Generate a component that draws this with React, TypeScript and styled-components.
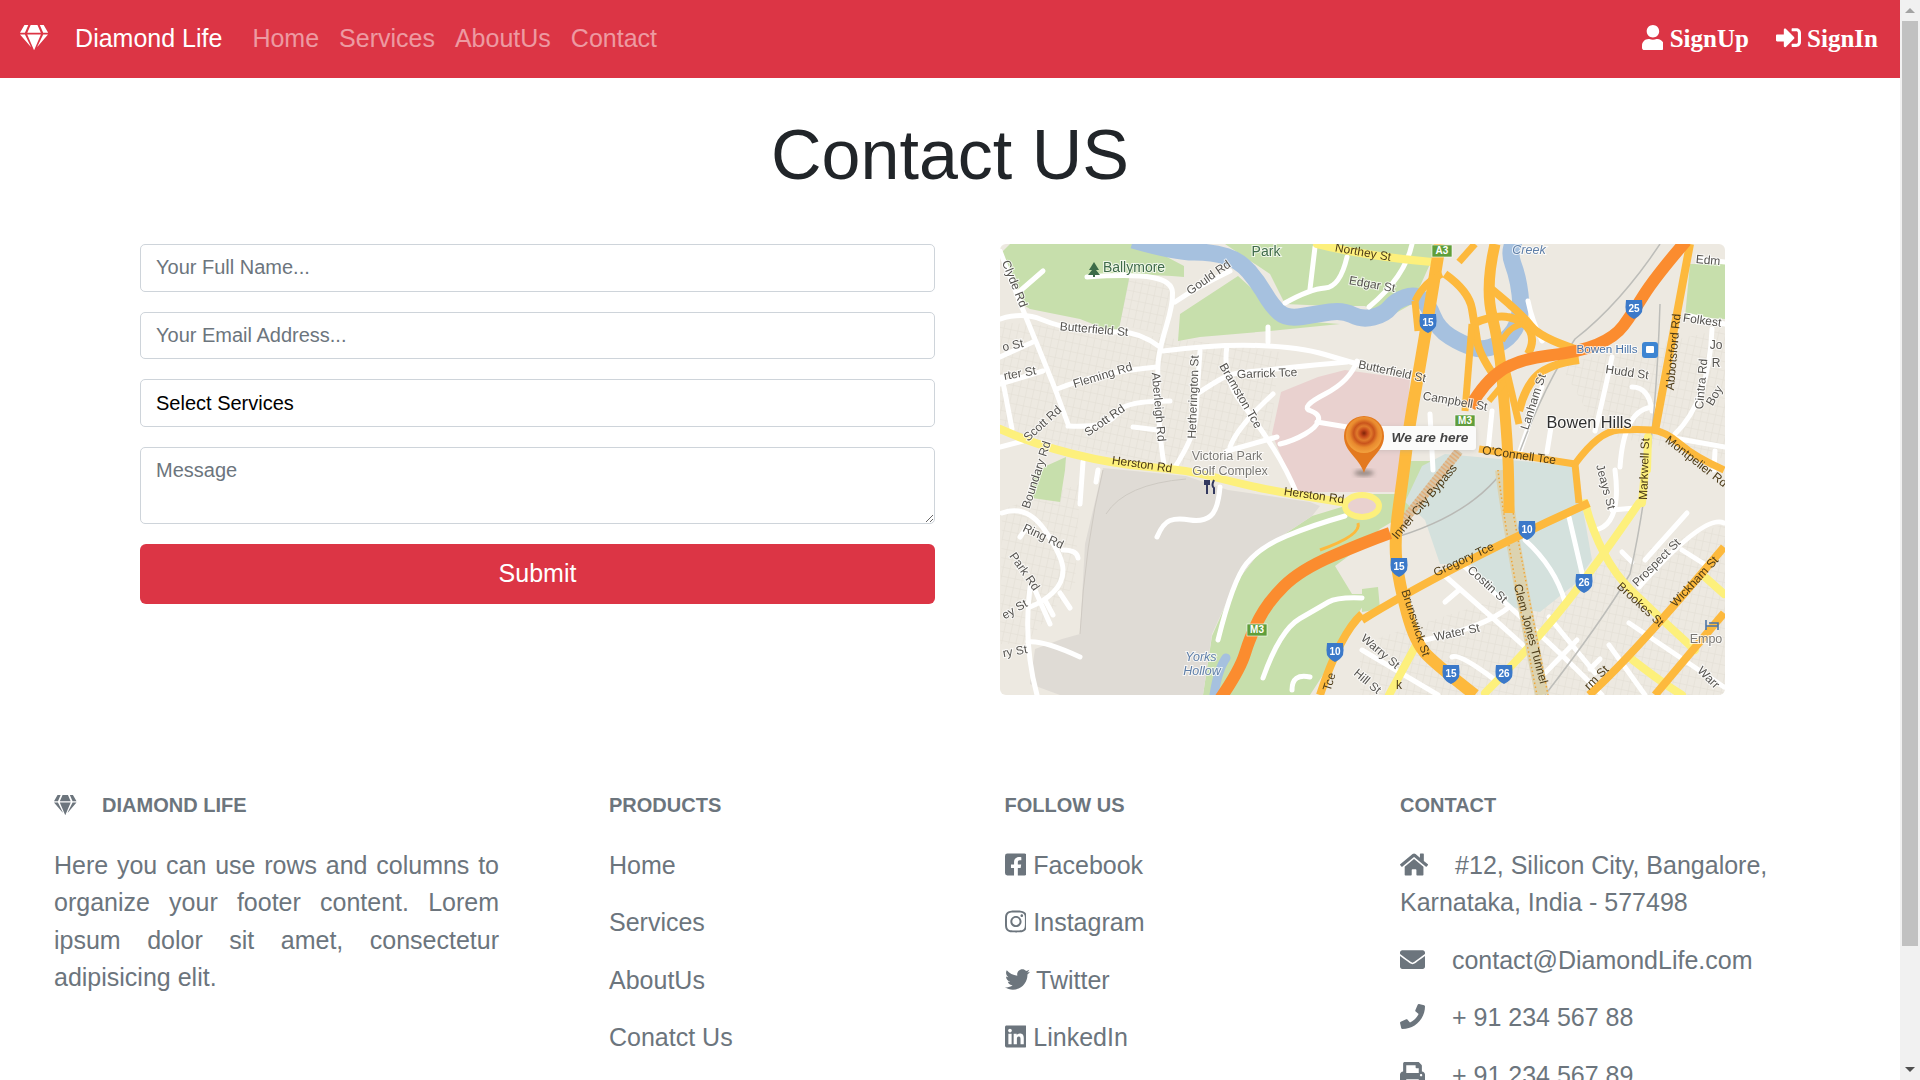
import React from "react";
import styled, { createGlobalStyle } from "styled-components";
import {
  FaEnvelope,
  FaFacebookSquare,
  FaGem,
  FaHome,
  FaInstagram,
  FaLinkedin,
  FaPhone,
  FaPrint,
  FaSignInAlt,
  FaTwitter,
  FaUser,
} from "react-icons/fa";

const GlobalStyle = createGlobalStyle`
  html, body {
    margin: 0;
    padding: 0;
    height: 100%;
    overflow: hidden;
    background: #fff;
  }
  body {
    font-family: "Liberation Sans", Arial, sans-serif;
    font-size: 25px;
    line-height: 1.5;
    color: #212529;
  }
  * {
    box-sizing: border-box;
  }
`;

const iconCss = `
  svg {
    vertical-align: -0.125em;
  }
`;

// font awesome glyphs keep their own width, the way the icon font does
const GemIcon = styled(FaGem)`
  width: 1.125em;
`;

const HomeIcon = styled(FaHome)`
  width: 1.125em;
`;

const UserIcon = styled(FaUser)`
  width: 0.875em;
`;

const FacebookIcon = styled(FaFacebookSquare)`
  width: 0.875em;
`;

const InstagramIcon = styled(FaInstagram)`
  width: 0.875em;
`;

const LinkedinIcon = styled(FaLinkedin)`
  width: 0.875em;
`;

/* page shell: content on the left, the browser scrollbar on the right */
const Shell = styled.div`
  display: flex;
  width: 100%;
  height: 100vh;
`;

const Content = styled.div`
  flex: 1;
  min-width: 0;
  height: 100%;
  overflow: hidden;
`;

const ScrollRail = styled.div`
  width: 20px;
  height: 100%;
  flex: none;
  display: flex;
  flex-direction: column;
  background: #f1f1f1;
`;

const ScrollButton = styled.div<{ $down?: boolean }>`
  height: 21px;
  flex: none;
  display: flex;
  align-items: center;
  justify-content: center;
  &::before {
    content: "";
    border-left: 5px solid transparent;
    border-right: 5px solid transparent;
    border-bottom: ${(p) => (p.$down ? "0" : "5px solid #a3a3a3")};
    border-top: ${(p) => (p.$down ? "5px solid #505050" : "0")};
  }
`;

const ScrollThumb = styled.div`
  height: 925px;
  margin: 0 2px;
  background: #c1c1c1;
`;

const ScrollGap = styled.div`
  flex: 1;
`;

/* navbar */
const NavBar = styled.nav`
  height: 78px;
  display: flex;
  align-items: center;
  padding: 0 22px 0 20px;
  background: #dc3545;
`;

const Brand = styled.a`
  color: #fff;
  font-size: 25px;
  line-height: 37.5px;
  margin-right: 20px;
  white-space: pre;
  ${iconCss}
  svg {
    margin-right: 20px;
  }
`;

const NavLinks = styled.div`
  display: flex;
  flex: 1;
`;

const NavLink = styled.a`
  padding: 0 10px;
  color: rgba(255, 255, 255, 0.5);
  font-size: 25px;
  line-height: 37.5px;
`;

const AuthLinks = styled.div`
  display: flex;
  gap: 27px;
`;

const AuthLink = styled.a`
  color: #fff;
  font-family: "Liberation Serif", "Times New Roman", serif;
  font-weight: 700;
  font-size: 25px;
  line-height: 37.5px;
  white-space: pre;
  ${iconCss}
`;

/* contact section */
const PageTitle = styled.h1`
  margin: 35px 0 47px;
  font-size: 70px;
  font-weight: 400;
  line-height: 84px;
  text-align: center;
  color: #212529;
`;

const ContactRow = styled.section`
  display: flex;
  align-items: flex-start;
  gap: 65px;
  padding-left: 140px;
`;

const ContactForm = styled.form`
  width: 795px;
  display: flex;
  flex-direction: column;
  gap: 20px;
`;

const fieldCss = `
  display: block;
  width: 100%;
  padding: 7.5px 15px;
  border: 1px solid #ced4da;
  border-radius: 5px;
  background: #fff;
  font-family: "Liberation Sans", Arial, sans-serif;
  font-size: 20px;
  line-height: 30px;
  outline: none;
  &::placeholder {
    color: #6c757d;
    opacity: 1;
  }
`;

const TextInput = styled.input`
  ${fieldCss}
  height: 47.5px;
  color: #495057;
`;

const ServiceSelect = styled.select`
  ${fieldCss}
  height: 47.5px;
  color: #000;
  appearance: none;
`;

const MessageBox = styled.textarea`
  ${fieldCss}
  height: 77px;
  color: #495057;
`;

const SubmitButton = styled.button`
  height: 60px;
  border: 0;
  border-radius: 6px;
  background: #dc3545;
  color: #fff;
  font-family: "Liberation Sans", Arial, sans-serif;
  font-size: 25px;
`;

/* map, drawn by hand */
const MapFrame = styled.svg`
  display: block;
  width: 725px;
  height: 451px;
  flex: none;
  border-radius: 6px;
  filter: blur(0.5px);
`;

const labelFill: Record<string, string> = {
  street: "#55534f",
  road: "#4b3a17",
  water: "#5f7fa8",
  park: "#3f6b4a",
  poi: "#7a7874",
  transit: "#4a74a8",
  town: "#2f2f2f",
};

const labelSize: Record<string, number> = {
  street: 12,
  road: 12,
  water: 12.5,
  park: 14,
  poi: 12.5,
  transit: 11.7,
  town: 16.3,
};

const MapLabel = styled.text<{ $kind: string }>`
  font-family: "Liberation Sans", Arial, sans-serif;
  font-size: ${(p) => labelSize[p.$kind]}px;
  font-style: ${(p) => (p.$kind === "water" ? "italic" : "normal")};
  fill: ${(p) => labelFill[p.$kind]};
  text-anchor: middle;
  dominant-baseline: middle;
  stroke: ${(p) => (p.$kind === "road" ? "none" : "rgba(255,255,255,0.75)")};
  stroke-width: 2px;
  paint-order: stroke;
`;

const ShieldText = styled.text`
  font-family: "Liberation Sans", Arial, sans-serif;
  font-size: 10px;
  font-weight: 700;
  fill: #fff;
  text-anchor: middle;
  dominant-baseline: middle;
`;

const PinText = styled.text`
  font-family: "Liberation Sans", Arial, sans-serif;
  font-size: 13.6px;
  font-weight: 700;
  font-style: italic;
  fill: #444;
  text-anchor: middle;
  dominant-baseline: middle;
`;

type Pt = [number, number];

const toPath = (pts: Pt[]) => {
  let d = `M${pts[0][0]} ${pts[0][1]}`;
  for (let i = 1; i < pts.length - 1; i++) {
    const mx = (pts[i][0] + pts[i + 1][0]) / 2;
    const my = (pts[i][1] + pts[i + 1][1]) / 2;
    d += i === pts.length - 2 ? ` Q${pts[i][0]} ${pts[i][1]} ${pts[i + 1][0]} ${pts[i + 1][1]}` : ` Q${pts[i][0]} ${pts[i][1]} ${mx} ${my}`;
  }
  if (pts.length === 2) d += ` L${pts[1][0]} ${pts[1][1]}`;
  return d;
};

const toPoly = (pts: Pt[]) => pts.map((p) => p.join(",")).join(" ");

const greens: Pt[][] = [
  [[2, 8], [10, 0], [135, 0], [165, 12], [184, 22], [184, 33], [172, 32], [130, 30], [118, 90], [80, 75], [30, 65], [22, 60]],
  [[178, 97], [180, 70], [238, 32], [258, 50], [280, 76], [313, 78], [340, 80], [270, 87], [200, 93]],
  [[225, 0], [440, 0], [430, 20], [412, 60], [385, 75], [365, 62], [330, 62], [285, 60], [270, 30]],
  [[690, 20], [725, 20], [725, 75], [685, 73]],
  [[46, 222], [66, 213], [65, 226], [60, 258], [32, 254], [33, 232]],
  [[203, 451], [212, 392], [235, 340], [262, 305], [312, 272], [345, 262], [372, 250], [400, 250], [407, 217], [430, 217], [420, 260], [395, 276], [380, 285], [365, 300], [335, 322], [352, 350], [372, 350], [350, 380], [330, 420], [310, 451]],
  [[362, 345], [378, 343], [380, 365], [362, 368]],
];

const golf: Pt[] = [[103, 224], [186, 232], [228, 246], [310, 258], [320, 262], [312, 272], [262, 305], [235, 340], [212, 390], [203, 451], [60, 451], [30, 440], [35, 405], [62, 395], [80, 390], [85, 300]];
const hospital: Pt[] = [[281, 148], [318, 133], [345, 126], [410, 135], [401, 248], [296, 248], [272, 190]];
const showground: Pt[] = [[422, 222], [445, 210], [575, 222], [582, 260], [592, 316], [575, 340], [540, 368], [505, 362], [470, 320], [440, 320], [425, 276], [405, 258]];

const blocks: Pt[][] = [
  [[0, 78], [120, 88], [280, 108], [270, 190], [180, 222], [40, 200], [0, 180]],
  [[125, 35], [172, 40], [160, 90], [118, 80]],
  [[560, 120], [725, 85], [725, 215], [600, 190]],
  [[360, 400], [725, 280], [725, 451], [360, 451]],
  [[2, 265], [80, 240], [75, 340], [25, 400], [0, 400]],
];

const riverWest: Pt[] = [[133, -4], [175, 8], [213, 8], [240, 17], [258, 38], [272, 62], [287, 75], [317, 70], [343, 66], [362, 76], [385, 70], [395, 57], [415, 50], [428, 60], [438, 85], [462, 100], [485, 107], [512, 93], [522, 67], [518, 33], [508, 7], [515, -4]];

const whiteRoads: Pt[][] = [
  [[0, 7], [23, 67], [55, 143], [68, 180]],
  [[20, 47], [43, 27]],
  [[0, 75], [23, 68], [60, 83], [100, 88], [140, 88], [160, 103]],
  [[87, 33], [133, 30], [172, 37], [173, 60], [160, 103], [157, 127], [160, 200], [165, 226]],
  [[175, 58], [197, 43], [230, 27]],
  [[163, 107], [217, 100], [300, 103], [350, 118], [365, 122]],
  [[268, 83], [268, 98]],
  [[227, 102], [222, 133], [260, 183], [287, 226], [297, 250]],
  [[200, 107], [197, 150], [195, 193], [173, 226]],
  [[197, 150], [222, 133], [240, 128], [347, 118]],
  [[57, 145], [100, 128], [157, 123]],
  [[68, 182], [90, 183], [113, 177], [125, 157], [170, 157]],
  [[133, 183], [158, 186]],
  [[230, 203], [237, 183], [273, 150]],
  [[227, 207], [277, 193]],
  [[280, 200], [293, 197], [317, 183], [320, 170], [300, 163], [350, 137], [357, 117]],
  [[317, 178], [347, 183]],
  [[0, 113], [33, 98]],
  [[0, 140], [43, 127]],
  [[2, 133], [12, 185]],
  [[0, 203], [23, 197]],
  [[83, 218], [80, 260]],
  [[98, 226], [96, 238]],
  [[2, 269], [27, 260], [63, 313], [63, 339], [43, 358], [30, 363]],
  [[30, 343], [23, 399], [37, 451]],
  [[28, 398], [43, 396], [80, 413]],
  [[35, 346], [50, 380]],
  [[45, 356], [53, 371]],
  [[60, 349], [70, 364]],
  [[63, 306], [77, 306], [78, 314]],
  [[20, 293], [27, 283]],
  [[157, 293], [163, 279], [177, 274], [203, 278], [218, 266], [220, 243]],
  [[218, 396], [233, 336], [260, 303], [313, 281], [345, 272]],
  [[263, 434], [280, 386], [320, 363], [337, 353], [362, 354]],
  [[292, 446], [292, 429], [310, 433]],
  [[285, 59], [310, 45], [340, 43], [347, 13]],
  [[310, 45], [315, 3]],
  [[369, 63], [405, 33], [412, 0]],
  [[528, 57], [532, 77], [542, 97]],
  [[430, 170], [433, 226]],
  [[492, 167], [488, 207]],
  [[520, 207], [542, 143]],
  [[547, 208], [552, 177]],
  [[595, 187], [602, 160], [612, 113]],
  [[620, 223], [624, 163], [655, 163]],
  [[632, 143], [649, 143], [652, 167]],
  [[675, 190], [709, 157], [712, 85]],
  [[668, 193], [725, 203]],
  [[698, 15], [725, 18]],
  [[690, 72], [725, 80]],
  [[715, 207], [714, 226]],
  [[569, 273], [582, 329]],
  [[525, 296], [555, 323], [565, 358]],
  [[465, 323], [559, 406], [602, 451]],
  [[425, 396], [485, 383], [509, 363]],
  [[445, 358], [459, 346]],
  [[445, 332], [500, 380], [525, 403]],
  [[452, 413], [459, 409], [495, 436]],
  [[362, 406], [438, 451]],
  [[577, 396], [545, 429]],
  [[549, 373], [595, 429]],
  [[609, 401], [645, 451]],
  [[629, 379], [724, 443]],
  [[645, 316], [687, 269]],
  [[639, 343], [705, 269], [724, 279]],
  [[682, 306], [709, 323]],
  [[595, 286], [622, 281], [615, 226]],
  [[612, 266], [635, 264]],
  [[622, 308], [632, 318]],
  [[590, 425], [600, 415]],
];

const yellowRoads: Pt[][] = [
  [[0, 185], [33, 200], [113, 220], [187, 226], [233, 238], [283, 249], [347, 259]],
  [[317, 0], [365, 12], [432, 18]],
  [[585, 259], [600, 316], [662, 376], [695, 406]],
  [[639, 259], [600, 316], [535, 399], [485, 449]],
  [[645, 226], [642, 259]],
  [[648, 193], [647, 226]],
  [[389, 451], [415, 403]],
  [[705, 333], [724, 350]],
  [[629, 413], [662, 439], [682, 451]],
];

const orangeRoads: { w: number; pts: Pt[] }[] = [
  { w: 12, pts: [[440, 0], [425, 93], [409, 183], [404, 226], [394, 296], [399, 339], [415, 399], [439, 423], [475, 451]] },
  { w: 8, pts: [[362, 376], [399, 353], [522, 289], [589, 259]] },
  { w: 8, pts: [[362, 370], [340, 390], [320, 451]] },
  { w: 7, pts: [[479, 205], [575, 220]] },
  { w: 7, pts: [[575, 220], [599, 187], [639, 185], [665, 187], [695, 213], [724, 226]] },
  { w: 7, pts: [[579, 259], [575, 220]] },
  { w: 8, pts: [[690, 0], [662, 150], [655, 187]] },
  { w: 11, pts: [[509, 269], [509, 226], [505, 167], [499, 100], [485, 43], [495, 0]] },
  { w: 8, pts: [[472, 80], [495, 70], [525, 77], [535, 97], [528, 110]] },
  { w: 8, pts: [[445, 30], [469, 47], [475, 83], [479, 110], [495, 133]] },
  { w: 7, pts: [[415, 57], [425, 37], [442, 30]] },
  { w: 7, pts: [[415, 57], [418, 87]] },
  { w: 7, pts: [[459, 18], [475, 0]] },
  { w: 7, pts: [[472, 80], [465, 167]] },
  { w: 8, pts: [[489, 43], [522, 70], [539, 93], [575, 105]] },
  { w: 6, pts: [[502, 97], [509, 83], [522, 80]] },
  { w: 8, pts: [[579, 116], [549, 120], [525, 143], [519, 167]] },
  { w: 6, pts: [[489, 157], [509, 133]] },
  { w: 7, pts: [[505, 120], [519, 180]] },
  { w: 8, pts: [[589, 451], [629, 416], [724, 303]] },
  { w: 8, pts: [[655, 451], [724, 369]] },
  { w: 3, pts: [[358, 279], [362, 291], [320, 306]] },
];

const freeways: Pt[][] = [
  [[220, 455], [240, 426], [250, 393], [267, 359], [300, 326], [365, 298], [390, 289]],
  [[470, 163], [485, 137], [519, 115], [579, 108], [615, 93], [632, 70], [655, 33], [686, -3]],
];

const mapLabels: [string, number, number, number, string][] = [
  ["Clyde Rd", 14, 40, 68, "street"],
  ["Ballymore", 134, 24, 0, "park"],
  ["Gould Rd", 209, 34, -35, "street"],
  ["Park", 266, 8, 0, "park"],
  ["Northey St", 363, 9, 10, "road"],
  ["Edgar St", 372, 41, 10, "street"],
  ["Creek", 529, 7, 0, "water"],
  ["Edm", 708, 17, 5, "street"],
  ["Butterfield St", 94, 86, 5, "street"],
  ["Butterfield St", 392, 128, 12, "street"],
  ["o St", 13, 102, -12, "street"],
  ["rter St", 20, 130, -10, "street"],
  ["Fleming Rd", 103, 132, -17, "street"],
  ["Aberleigh Rd", 158, 163, 85, "street"],
  ["Hetherington St", 194, 153, -88, "street"],
  ["Bramston Tce", 240, 152, 60, "street"],
  ["Garrick Tce", 267, 130, -2, "street"],
  ["Scott Rd", 43, 180, -42, "street"],
  ["Scott Rd", 105, 177, -35, "street"],
  ["Boundary Rd", 37, 231, -72, "street"],
  ["Herston Rd", 142, 221, 8, "road"],
  ["Herston Rd", 314, 252, 8, "road"],
  ["Victoria Park", 227, 213, 0, "poi"],
  ["Golf Complex", 230, 228, 0, "poi"],
  ["Ring Rd", 43, 293, 25, "street"],
  ["Park Rd", 24, 328, 55, "street"],
  ["ey St", 15, 366, -30, "street"],
  ["ry St", 15, 408, -10, "street"],
  ["Yorks", 201, 414, 0, "water"],
  ["Hollow", 202, 428, 0, "water"],
  ["Inner City Bypass", 425, 258, -50, "road"],
  ["Gregory Tce", 464, 316, -25, "road"],
  ["Costin St", 487, 341, 42, "street"],
  ["Clem Jones Tunnel", 530, 390, 75, "road"],
  ["Brunswick St", 415, 379, 72, "road"],
  ["Water St", 457, 389, -12, "street"],
  ["Warry St", 380, 408, 40, "street"],
  ["Hill St", 367, 438, 40, "street"],
  ["Brookes St", 640, 361, 43, "road"],
  ["Prospect St", 657, 319, -45, "street"],
  ["Wickham St", 695, 338, -47, "road"],
  ["Empo", 706, 396, 0, "poi"],
  ["Jeays St", 605, 243, 75, "street"],
  ["Markwell St", 645, 225, -88, "road"],
  ["Montpelier Rd", 696, 218, 38, "road"],
  ["O'Connell Tce", 519, 212, 8, "road"],
  ["Bowen Hills", 589, 180, 0, "town"],
  ["Bowen Hills", 607, 106, 0, "transit"],
  ["Hudd St", 627, 129, 8, "street"],
  ["Abbotsford Rd", 674, 108, -85, "road"],
  ["Folkest", 702, 77, 8, "street"],
  ["Campbell St", 455, 158, 10, "street"],
  ["Lanham St", 534, 158, -72, "street"],
  ["Cintra Rd", 702, 140, -85, "street"],
  ["Boy", 715, 152, -60, "street"],
  ["Jo", 716, 102, 0, "street"],
  ["R", 716, 120, 0, "street"],
  ["Warr", 708, 434, 45, "street"],
  ["rm St", 597, 434, -45, "road"],
  ["Tce", 330, 438, -72, "road"],
  ["k", 399, 442, 0, "road"],
];

const interstates: [string, number, number][] = [
  ["15", 428, 79],
  ["25", 634, 65],
  ["10", 527, 286],
  ["26", 584, 339],
  ["15", 399, 323],
  ["15", 451, 430],
  ["26", 504, 430],
  ["10", 335, 408],
];

const motorways: [string, number, number][] = [
  ["M3", 257, 386],
  ["M3", 465, 177],
  ["A3", 442, 7],
];

const MapPicture = () => (
  <MapFrame viewBox="0 0 725 451" role="img" aria-label="Map">
    <defs>
      <radialGradient id="pinHead" cx="50%" cy="45%" r="55%">
        <stop offset="0" stopColor="#7e2308" />
        <stop offset="0.18" stopColor="#c4471a" />
        <stop offset="0.36" stopColor="#e07b2c" />
        <stop offset="0.52" stopColor="#c9541c" />
        <stop offset="0.72" stopColor="#e98a2e" />
        <stop offset="1" stopColor="#f2a23f" />
      </radialGradient>
      <filter id="soft" x="-30%" y="-30%" width="160%" height="160%">
        <feGaussianBlur stdDeviation="2" />
      </filter>
      <pattern id="hatch" width="7" height="9" patternUnits="userSpaceOnUse" patternTransform="rotate(12)">
        <path d="M0 0 V9 M0 0 H7" fill="none" stroke="#e2ddd3" strokeWidth="1" />
      </pattern>
    </defs>
    <rect width="725" height="451" fill="#ede9e1" />
    {blocks.map((b, i) => (
      <polygon key={i} points={toPoly(b)} fill="url(#hatch)" />
    ))}
    {greens.map((g, i) => (
      <polygon key={i} points={toPoly(g)} fill="#c7dfac" />
    ))}
    <polygon points={toPoly(golf)} fill="#dfdbd5" />
    <polygon points={toPoly(hospital)} fill="#e9d1cf" />
    <polygon points={toPoly(showground)} fill="#d4e1dd" />
    <path d={toPath(riverWest)} fill="none" stroke="#a6c1df" strokeWidth="17" strokeLinejoin="round" />
    <path d="M214 451 Q218 425 226 414" fill="none" stroke="#a6c1df" strokeWidth="9" strokeLinecap="round" />
    <path d="M103 226 Q85 300 80 390" fill="none" stroke="#cfcac3" strokeWidth="1" />
    <path d="M106 270 Q125 240 186 235" fill="none" stroke="#cdc9c2" strokeWidth="1" />
    {whiteRoads.map((r, i) => (
      <path key={i} d={toPath(r)} fill="none" stroke="#fff" strokeWidth="5" strokeLinecap="round" strokeLinejoin="round" />
    ))}
    <path d="M520 207 Q545 140 575 95 Q620 60 660 0" fill="none" stroke="#bdbdb9" strokeWidth="1.5" />
    <path d="M545 451 Q600 380 630 330 Q655 220 660 60" fill="none" stroke="#bdbdb9" strokeWidth="1.5" />
    <path d="M400 292 Q470 270 502 228" fill="none" stroke="#b9b9b5" strokeWidth="1.5" />
    {yellowRoads.map((r, i) => (
      <path key={i} d={toPath(r)} fill="none" stroke="#fdf07c" strokeWidth="8" strokeLinecap="round" strokeLinejoin="round" />
    ))}
    <ellipse cx="362" cy="262" rx="17" ry="11" fill="#e9d1cf" stroke="#fdf07c" strokeWidth="6" />
    <path d="M394 289 L459 207" fill="none" stroke="#d9c6a8" strokeWidth="9" />
    <path d="M394 289 L459 207" fill="none" stroke="#e89a55" strokeWidth="9" strokeDasharray="1.5 2" opacity="0.55" />
    <path d="M502 226 Q510 290 542 451" fill="none" stroke="#dcd3b0" strokeWidth="14" />
    <path d="M498 226 Q505 290 537 451" fill="none" stroke="#f0a638" strokeWidth="1.5" strokeDasharray="1.5 2.5" />
    <path d="M506 226 Q516 290 548 451" fill="none" stroke="#f0a638" strokeWidth="1.5" strokeDasharray="1.5 2.5" />
    {orangeRoads.map((r, i) => (
      <path key={i} d={toPath(r.pts)} fill="none" stroke="#fdb93d" strokeWidth={r.w} strokeLinejoin="round" />
    ))}
    {freeways.map((r, i) => (
      <path key={i} d={toPath(r)} fill="none" stroke="#fb8c2f" strokeWidth="12" strokeLinejoin="round" />
    ))}
    {mapLabels.map(([text, x, y, angle, kind], i) => (
      <MapLabel key={i} $kind={kind} x={x} y={y} transform={`rotate(${angle} ${x} ${y})`}>
        {text}
      </MapLabel>
    ))}
    <path d="M94 18 L89 26 H92 L88 31 H93 V33 H95 V31 H100 L96 26 H99 Z" fill="#3c6b48" />
    <path d="M207 236 V250 M207 240 H205 V236 M207 240 H209 V236 M214 236 Q211 242 214 244 V250" fill="none" stroke="#33395f" strokeWidth="2" />
    <rect x="642" y="98" width="16" height="16" rx="3" fill="#3d85d2" />
    <rect x="646" y="102" width="8" height="7" rx="1" fill="#fff" />
    <path d="M706 376 V386 M706 382 H718 V386 M709 379 H718 V382" fill="none" stroke="#4a74a8" strokeWidth="1.6" />
    {interstates.map(([n, x, y], i) => (
      <g key={i} transform={`translate(${x} ${y})`}>
        <path d="M-8 -9 H8 Q9 -2 8 3 Q5 8 0 10 Q-5 8 -8 3 Q-9 -2 -8 -9 Z" fill="#3b79c9" />
        <ShieldText y="0">{n}</ShieldText>
      </g>
    ))}
    {motorways.map(([n, x, y], i) => (
      <g key={i} transform={`translate(${x} ${y})`}>
        <rect x="-10" y="-6" width="20" height="12" fill="#5f9e3a" stroke="#fff" strokeWidth="0.6" />
        <ShieldText y="0.5">{n}</ShieldText>
      </g>
    ))}
    <rect x="366" y="183" width="110" height="24" rx="3" fill="#9b9b9b" opacity="0.35" filter="url(#soft)" />
    <rect x="368" y="182" width="108" height="24" rx="3" fill="#fbfbfa" />
    <PinText x="430" y="194">We are here</PinText>
    <ellipse cx="364" cy="229" rx="10" ry="3" fill="#5c5650" opacity="0.6" filter="url(#soft)" />
    <path d="M364 229 C359 213 344 208 344 192 A20 20 0 0 1 384 192 C384 208 369 213 364 229 Z" fill="#e3791f" />
    <circle cx="364" cy="191" r="18" fill="url(#pinHead)" />
  </MapFrame>
);

/* footer */
const FooterGrid = styled.footer`
  display: grid;
  grid-template-columns: 555px 395.5px 395.5px 445px;
  margin-top: 98px;
  padding-left: 54px;
`;

const FooterColumn = styled.div`
  min-width: 0;
`;

const FooterTitle = styled.h6`
  margin: 0 0 29.75px;
  color: #6c757d;
  font-size: 20px;
  font-weight: 700;
  line-height: 24px;
  text-transform: uppercase;
  white-space: pre;
  ${iconCss}
  svg {
    margin-right: 20px;
  }
`;

const FooterText = styled.p`
  width: 445px;
  margin: 0 0 20px;
  color: #6c757d;
  text-align: justify;
`;

const FooterLine = styled.p`
  margin: 0 0 20px;
  color: #6c757d;
  white-space: pre-wrap;
  ${iconCss}
`;

const ContactLine = styled(FooterLine)`
  svg {
    margin-right: 20px;
  }
`;

const App = () => (
  <>
    <GlobalStyle />
    <Shell>
      <Content>
        <NavBar>
          <Brand>
            <GemIcon />
            {" Diamond Life"}
          </Brand>
          <NavLinks>
            <NavLink>Home</NavLink>
            <NavLink>Services</NavLink>
            <NavLink>AboutUs</NavLink>
            <NavLink>Contact</NavLink>
          </NavLinks>
          <AuthLinks>
            <AuthLink>
              <UserIcon />
              {" SignUp"}
            </AuthLink>
            <AuthLink>
              <FaSignInAlt />
              {" SignIn"}
            </AuthLink>
          </AuthLinks>
        </NavBar>

        <PageTitle>Contact US</PageTitle>

        <ContactRow>
          <ContactForm onSubmit={(e) => e.preventDefault()}>
            <TextInput type="text" placeholder="Your Full Name..." />
            <TextInput type="email" placeholder="Your Email Address..." />
            <ServiceSelect defaultValue="">
              <option value="">Select Services</option>
            </ServiceSelect>
            <MessageBox placeholder="Message" />
            <SubmitButton type="submit">Submit</SubmitButton>
          </ContactForm>
          <MapPicture />
        </ContactRow>

        <FooterGrid>
          <FooterColumn>
            <FooterTitle>
              <GemIcon />
              {" Diamond Life"}
            </FooterTitle>
            <FooterText>
              Here you can use rows and columns to organize your footer content. Lorem ipsum dolor sit amet, consectetur
              adipisicing elit.
            </FooterText>
          </FooterColumn>
          <FooterColumn>
            <FooterTitle>Products</FooterTitle>
            <FooterLine>Home</FooterLine>
            <FooterLine>Services</FooterLine>
            <FooterLine>AboutUs</FooterLine>
            <FooterLine>Conatct Us</FooterLine>
          </FooterColumn>
          <FooterColumn>
            <FooterTitle>Follow Us</FooterTitle>
            <FooterLine>
              <FacebookIcon />
              {" Facebook"}
            </FooterLine>
            <FooterLine>
              <InstagramIcon />
              {" Instagram"}
            </FooterLine>
            <FooterLine>
              <FaTwitter />
              {" Twitter"}
            </FooterLine>
            <FooterLine>
              <LinkedinIcon />
              {" LinkedIn"}
            </FooterLine>
          </FooterColumn>
          <FooterColumn>
            <FooterTitle>Contact</FooterTitle>
            <ContactLine>
              <HomeIcon />
              {" #12, Silicon City, Bangalore, Karnataka, India - 577498"}
            </ContactLine>
            <ContactLine>
              <FaEnvelope />
              {" contact@DiamondLife.com"}
            </ContactLine>
            <ContactLine>
              <FaPhone />
              {" + 91 234 567 88"}
            </ContactLine>
            <ContactLine>
              <FaPrint />
              {" + 91 234 567 89"}
            </ContactLine>
          </FooterColumn>
        </FooterGrid>
      </Content>
      <ScrollRail>
        <ScrollButton />
        <ScrollThumb />
        <ScrollGap />
        <ScrollButton $down />
      </ScrollRail>
    </Shell>
  </>
);

export default App;
